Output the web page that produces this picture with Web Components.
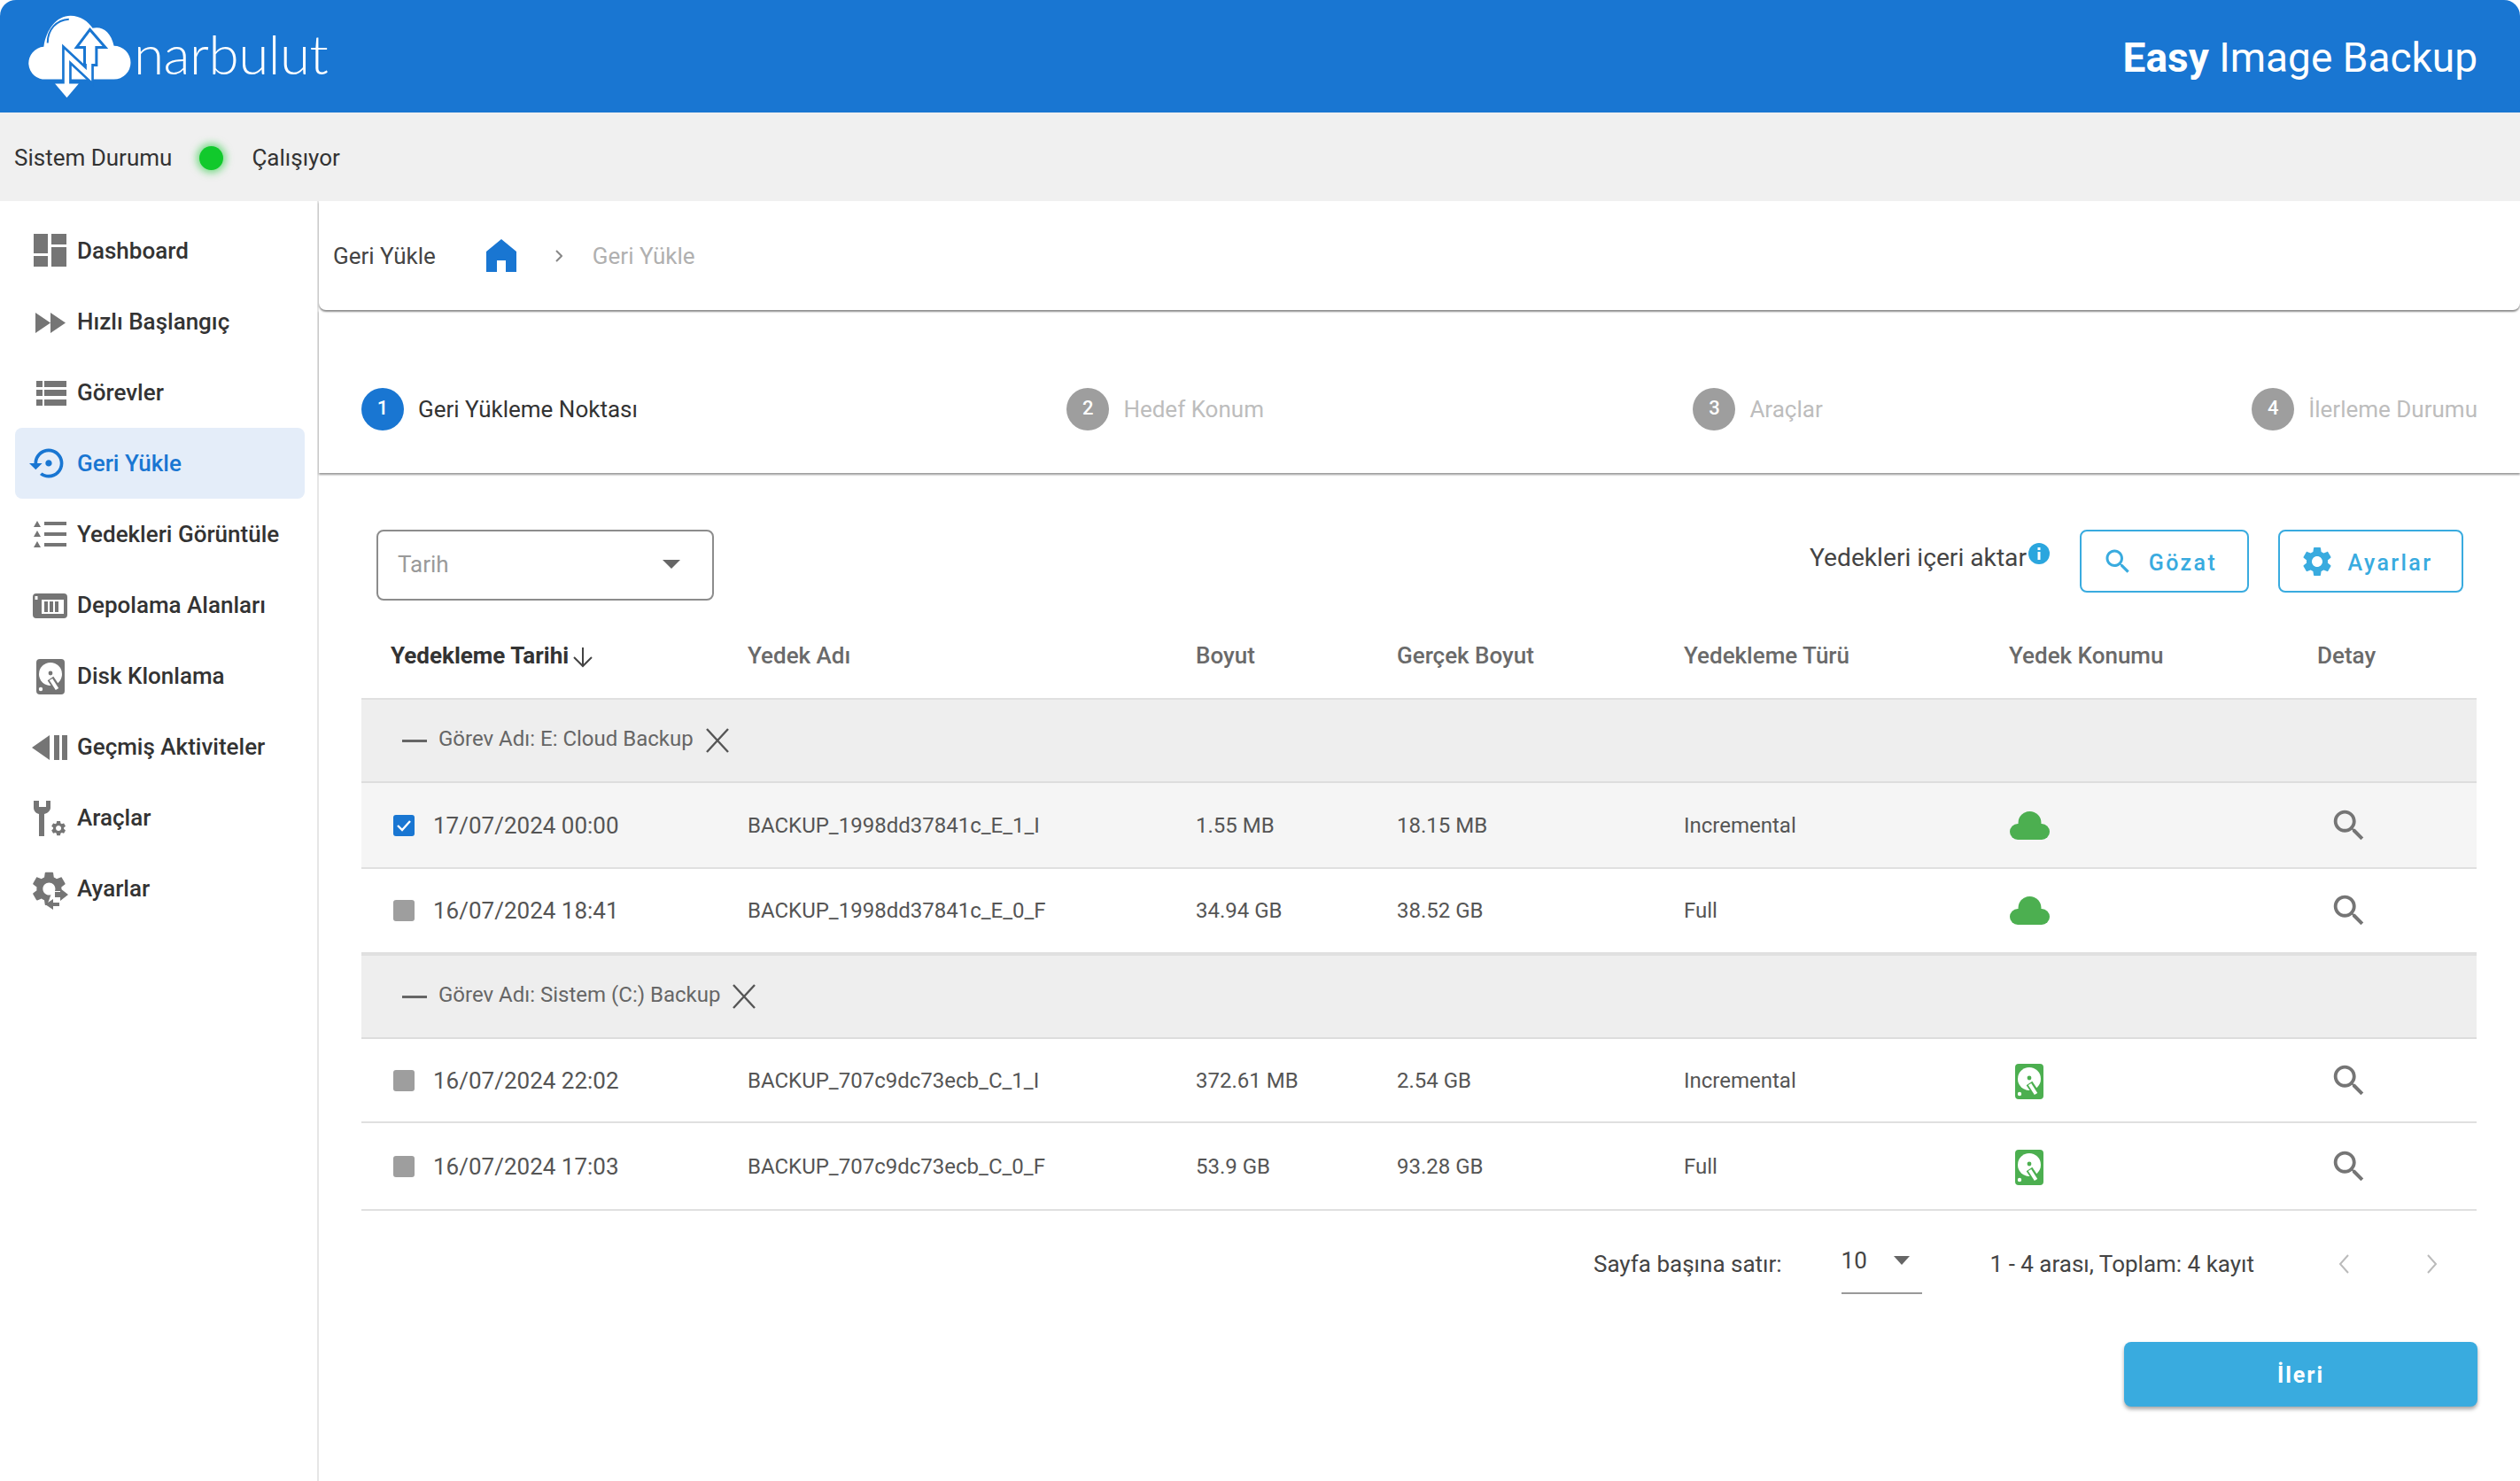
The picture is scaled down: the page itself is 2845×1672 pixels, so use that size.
<!DOCTYPE html>
<html lang="tr">
<head>
<meta charset="utf-8">
<title>Easy Image Backup</title>
<style>
    html, body { margin: 0; background: #fff; }
    body { font-family: Roboto, "Liberation Sans", sans-serif; color: #333; width: 2845px; height: 1672px; overflow: hidden; }
    .page { display: flex; height: 1445px; }
    .content { width: 2485px; display: flex; flex-direction: column; }
</style>
</head>
<body>
<app-header></app-header>
<status-bar state="Çalışıyor">Sistem Durumu</status-bar>
<div class="page">
    <side-nav>
        <nav-item icon="dashboard">Dashboard</nav-item>
        <nav-item icon="quick">Hızlı Başlangıç</nav-item>
        <nav-item icon="tasks">Görevler</nav-item>
        <nav-item icon="restore" active>Geri Yükle</nav-item>
        <nav-item icon="list">Yedekleri Görüntüle</nav-item>
        <nav-item icon="storage">Depolama Alanları</nav-item>
        <nav-item icon="disk">Disk Klonlama</nav-item>
        <nav-item icon="history">Geçmiş Aktiviteler</nav-item>
        <nav-item icon="tools">Araçlar</nav-item>
        <nav-item icon="settings">Ayarlar</nav-item>
    </side-nav>
    <div class="content">
        <bread-crumb title-text="Geri Yükle">Geri Yükle</bread-crumb>
        <step-bar>
            <step-item number="1" active>Geri Yükleme Noktası</step-item>
            <step-item number="2">Hedef Konum</step-item>
            <step-item number="3">Araçlar</step-item>
            <step-item number="4">İlerleme Durumu</step-item>
        </step-bar>
        <backup-toolbar>
            <span slot="select">Tarih</span>
            <span slot="label">Yedekleri içeri aktar</span>
            <outline-button icon="search">Gözat</outline-button>
            <outline-button icon="gear">Ayarlar</outline-button>
        </backup-toolbar>
        <backup-table>
            <table-head></table-head>
            <group-row height="96">Görev Adı: E: Cloud Backup</group-row>
            <backup-row height="97" loc="cloud" checked>
                <span slot="date">17/07/2024 00:00</span><span slot="name">BACKUP_1998dd37841c_E_1_I</span>
                <span slot="size">1.55 MB</span><span slot="real">18.15 MB</span><span slot="type">Incremental</span>
            </backup-row>
            <backup-row height="96" loc="cloud">
                <span slot="date">16/07/2024 18:41</span><span slot="name">BACKUP_1998dd37841c_E_0_F</span>
                <span slot="size">34.94 GB</span><span slot="real">38.52 GB</span><span slot="type">Full</span>
            </backup-row>
            <group-row height="96">Görev Adı: Sistem (C:) Backup</group-row>
            <backup-row height="95" loc="disk">
                <span slot="date">16/07/2024 22:02</span><span slot="name">BACKUP_707c9dc73ecb_C_1_I</span>
                <span slot="size">372.61 MB</span><span slot="real">2.54 GB</span><span slot="type">Incremental</span>
            </backup-row>
            <backup-row height="99" loc="disk">
                <span slot="date">16/07/2024 17:03</span><span slot="name">BACKUP_707c9dc73ecb_C_0_F</span>
                <span slot="size">53.9 GB</span><span slot="real">93.28 GB</span><span slot="type">Full</span>
            </backup-row>
        </backup-table>
        <table-pager></table-pager>
        <next-button>İleri</next-button>
    </div>
</div>

<script>
const GEAR = "M19.14 12.94c.04-.3.06-.61.06-.94 0-.32-.02-.64-.07-.94l2.03-1.58c.18-.14.23-.41.12-.61l-1.92-3.32c-.12-.22-.37-.29-.59-.22l-2.39.96c-.5-.38-1.03-.7-1.62-.94l-.36-2.54c-.04-.24-.24-.41-.48-.41h-3.84c-.24 0-.43.17-.47.41l-.36 2.54c-.59.24-1.13.57-1.62.94l-2.39-.96c-.22-.08-.47 0-.59.22L2.74 8.87c-.12.21-.08.47.12.61l2.03 1.58c-.05.3-.09.63-.09.94s.02.64.07.94l-2.03 1.58c-.18.14-.23.41-.12.61l1.92 3.32c.12.22.37.29.59.22l2.39-.96c.5.38 1.03.7 1.62.94l.36 2.54c.05.24.24.41.48.41h3.84c.24 0 .44-.17.47-.41l.36-2.54c.59-.24 1.13-.56 1.62-.94l2.39.96c.22.08.47 0 .59-.22l1.92-3.32c.12-.22.07-.47-.12-.61l-2.01-1.58zM12 15.6c-1.98 0-3.6-1.62-3.6-3.6s1.62-3.6 3.6-3.6 3.6 1.62 3.6 3.6-1.62 3.6-3.6 3.6z"
const SEARCH = "M15.5 14h-.79l-.28-.27C15.41 12.59 16 11.11 16 9.5 16 5.91 13.09 3 9.5 3S3 5.91 3 9.5 5.91 16 9.5 16c1.61 0 3.09-.59 4.23-1.57l.27.28v.79l5 4.99L20.49 19l-4.99-5zm-6 0C7.01 14 5 11.99 5 9.5S7.01 5 9.5 5 14 7.01 14 9.5 11.99 14 9.5 14z"
const RESTORE = "M14 12c0-1.1-.9-2-2-2s-2 .9-2 2 .9 2 2 2 2-.9 2-2zm-2-9c-4.97 0-9 4.03-9 9H0l4 4 4-4H5c0-3.87 3.13-7 7-7s7 3.13 7 7-3.13 7-7 7c-1.51 0-2.91-.49-4.06-1.3l-1.42 1.44C8.04 20.3 9.94 21 12 21c4.97 0 9-4.03 9-9s-4.03-9-9-9z"

// Disk drawing, used in the side menu (grey) and in the table (green)
const diskShape = color => `
    <rect x="8" y="3" width="32" height="40" rx="4" fill="${color}"/>
    <circle cx="24" cy="20" r="13" fill="#fff"/>
    <circle cx="24" cy="19" r="2.4" fill="${color}"/>
    <path d="M24 25l8 12" stroke="${color}" stroke-width="8" fill="none"/>
    <path d="M24.5 26l7 11" stroke="#fff" stroke-width="4" fill="none"/>
    <circle cx="13" cy="37" r="2.2" fill="#fff"/>`

// Menu icons live in a 44x44 box
const navIcons = {
    dashboard: `<path d="M5 3h16v22H5zM5 28h16v12H5zM25 3h17v12H25zM25 18h17v22H25z"/>`,
    quick: `<path d="M7 12l17 11.5L7 35zM24 12l17 11.5L24 35z"/>`,
    tasks: `<path d="M8 9h7v7H8zM17 9h25v7H17zM8 19h7v7H8zM17 19h25v7H17zM8 30h7v7H8zM17 30h25v7H17z"/>`,
    restore: `<path transform="scale(1.83)" d="${RESTORE}"/>`,
    list: `<path d="M9 7l4 7H5zM9 18l4 7H5zM9 30l4 7H5zM17 8h25v4H17zM17 20h25v4H17zM17 32h25v4H17z"/>`,
    storage: `<path fill-rule="evenodd" d="M8 9h31a4 4 0 0 1 4 4v20a4 4 0 0 1-4 4H8a4 4 0 0 1-4-4V13a4 4 0 0 1 4-4zM14 16v16h25V16zM6.500 12v4h3v-4z"/><path d="M17 18h4v12h-4zM23 18h4v12h-4zM29 18h4v12h-4z"/>`,
    disk: diskShape("#757575"),
    history: `<path d="M3 23L23 9v28zM28 9h6v28h-6zM37 9h6v28h-6z"/>`,
    tools: `<path d="M5 3v8c0 3 2 6 6 7v25h6V18c4-1 7-4 7-7V3l-5 0v7h-8V3z"/><path transform="translate(23 24) scale(.84)" d="${GEAR}"/>`,
    settings: `<path transform="translate(-1 -1) scale(1.95)" d="${GEAR}"/><path fill="#fff" d="M26 25h20v22H18z"/><path d="M29 26h6v-4l9 7-9 7v-4h-6zM27 34l-9 6 9 6v-4h7v-4h-7z"/>`
}

const bar = `:host { display: block; box-sizing: border-box; }`

class AppHeader extends HTMLElement {
    connectedCallback() {
        this.attachShadow({ mode: "open" }).innerHTML = `
            <style>
                ${bar}
                :host { height: 127px; background: #1976d2; border-radius: 18px 18px 0 0; color: #fff; }
                .in { height: 100%; display: flex; align-items: center; justify-content: space-between; padding: 0 48px 0 32px; }
                .logo { display: flex; align-items: flex-start; height: 127px; }
                svg { margin-top: 15px; display: block; }
                .word { font-family: Lato, sans-serif; font-weight: 300; font-size: 62px; line-height: 70px; margin: 25px 0 0 2px; letter-spacing: -.5px; }
                .title { font-size: 46px; padding-top: 3px; }
                b { font-weight: 700; }
            </style>
            <div class="in">
                <div class="logo">
                    <svg width="117" height="97" viewBox="35 45 350 290">
                        <path fill="#fff" d="M95 268a55 55 0 0 1-8-110c8-60 45-105 90-105 35 0 60 20 75 42 30-8 62 10 72 60a55 55 0 0 1 0 113z"/>
                        <path fill="none" stroke="#1976d2" stroke-width="6" d="M100 145c0-45 30-78 72-80"/>
                        <path fill="none" stroke="#1976d2" stroke-width="32" stroke-linejoin="miter" d="M165 290V185l75 70V140"/>
                        <path fill="#fff" stroke="#1976d2" stroke-width="9" d="M198 160l45-60 52 60h-30v60h-40v-60z"/>
                        <path fill="none" stroke="#fff" stroke-width="16" stroke-linejoin="miter" d="M165 290V185l75 70V140"/>
                        <path fill="#fff" d="M125 283h80l-40 47z"/>
                    </svg>
                    <span class="word">narbulut</span>
                </div>
                <div class="title"><b>Easy</b> Image Backup</div>
            </div>`
    }
}

class StatusBar extends HTMLElement {
    connectedCallback() {
        this.attachShadow({ mode: "open" }).innerHTML = `
            <style>
                ${bar}
                :host { height: 100px; background: #f0f0f0; font-size: 26px; color: #333; }
                .in { height: 100%; display: flex; align-items: center; padding: 2px 0 0 16px; box-sizing: border-box; }
                i { width: 27px; height: 27px; border-radius: 50%; background: #11c92c; box-shadow: 0 0 9px 3px rgba(17, 201, 44, .55); margin: 0 32px 0 31px; }
            </style>
            <div class="in"><slot></slot><i></i><span>${this.getAttribute("state")}</span></div>`
    }
}

class SideNav extends HTMLElement {
    connectedCallback() {
        this.attachShadow({ mode: "open" }).innerHTML = `
            <style>
                ${bar}
                :host { width: 360px; flex: none; border-right: 2px solid #e6e6e6; padding: 16px 14px 0 17px; }
            </style>
            <slot></slot>`
    }
}

class NavItem extends HTMLElement {
    connectedCallback() {
        const active = this.hasAttribute("active")
        this.attachShadow({ mode: "open" }).innerHTML = `
            <style>
                ${bar}
                :host { height: 80px; border-radius: 8px; background: ${active ? "#e4edf9" : "none"}; color: ${active ? "#1976d2" : "#333"}; font-size: 26px; font-weight: 500; }
                .in { height: 100%; display: flex; align-items: center; padding-left: 16px; }
                svg { margin-right: 10px; fill: ${active ? "#1976d2" : "#757575"}; flex: none; overflow: visible; }
            </style>
            <div class="in"><svg width="44" height="44" viewBox="0 0 44 44">${navIcons[this.getAttribute("icon")]}</svg><slot></slot></div>`
    }
}

class BreadCrumb extends HTMLElement {
    connectedCallback() {
        this.attachShadow({ mode: "open" }).innerHTML = `
            <style>
                ${bar}
                :host { height: 123px; flex: none; border-radius: 0 0 8px 8px; box-shadow: 0 2px 2px rgba(0, 0, 0, .45); font-size: 26px; color: #444; background: #fff; }
                .in { height: 100%; display: flex; align-items: center; padding: 0 0 0 16px; }
                svg.home { margin: 0 0 0 57px; }
                svg.next { margin: 0 34px 0 44px; }
                span { color: #b0b0b0; }
            </style>
            <div class="in">
                <slot></slot>
                <svg class="home" width="34" height="37" viewBox="0 0 34 37" fill="#1976d2"><path d="M17 0l17 14v23H22V24H12v13H0V14z"/></svg>
                <svg class="next" width="8" height="16" viewBox="0 0 8 16" fill="none" stroke="#888" stroke-width="2"><path d="M1 2l6 6-6 6"/></svg>
                <span>${this.getAttribute("title-text")}</span>
            </div>`
    }
}

class StepBar extends HTMLElement {
    connectedCallback() {
        this.attachShadow({ mode: "open" }).innerHTML = `
            <style>
                ${bar}
                :host { height: 184px; flex: none; box-shadow: 0 2px 2px rgba(0, 0, 0, .4); }
                .in { height: 100%; display: flex; align-items: center; justify-content: space-between; padding: 40px 48px 0 48px; box-sizing: border-box; }
            </style>
            <div class="in"><slot></slot></div>`
    }
}

class StepItem extends HTMLElement {
    connectedCallback() {
        const active = this.hasAttribute("active")
        this.attachShadow({ mode: "open" }).innerHTML = `
            <style>
                :host { display: flex; align-items: center; font-size: 26px; color: ${active ? "#333" : "#bdbdbd"}; }
                b { width: 48px; height: 48px; border-radius: 50%; background: ${active ? "#1976d2" : "#9e9e9e"}; color: #fff; font-size: 22px; font-weight: 500; display: flex; align-items: center; justify-content: center; margin-right: 16px; padding-bottom: 3px; box-sizing: border-box; }
            </style>
            <b>${this.getAttribute("number")}</b><slot></slot>`
    }
}

class BackupToolbar extends HTMLElement {
    connectedCallback() {
        this.attachShadow({ mode: "open" }).innerHTML = `
            <style>
                ${bar}
                :host { flex: none; margin: 64px 64px 0 65px; height: 94px; }
                .in { display: flex; justify-content: space-between; align-items: flex-start; }
                .select { width: 381px; height: 80px; box-sizing: border-box; border: 2px solid #8c8c8c; border-radius: 8px; display: flex; align-items: center; justify-content: space-between; padding: 0 36px 2px 22px; font-size: 26px; color: #9a9a9a; }
                .arrow { width: 0; height: 0; border: 10px solid transparent; border-top: 10px solid #666; border-bottom: 0; }
                .right { display: flex; align-items: flex-start; }
                .label { font-size: 28.2px; color: #444; line-height: 64px; }
                svg { margin: 15px 34px 0 2px; }
                ::slotted(outline-button) { margin-left: 33px; }
                ::slotted(outline-button:first-of-type) { margin-left: 0; }
            </style>
            <div class="in">
                <div class="select"><slot name="select"></slot><i class="arrow"></i></div>
                <div class="right">
                    <div class="label"><slot name="label"></slot></div>
                    <svg width="24" height="24" viewBox="0 0 24 24"><circle cx="12" cy="12" r="12" fill="#2ba6de"/><path fill="#fff" d="M10.500 10h3v9h-3zM10.500 5h3v3h-3z"/></svg>
                    <slot></slot>
                </div>
            </div>`
    }
}

class OutlineButton extends HTMLElement {
    connectedCallback() {
        const search = this.getAttribute("icon") === "search"
        this.attachShadow({ mode: "open" }).innerHTML = `
            <style>
                :host { display: inline-flex; align-items: center; justify-content: center; box-sizing: border-box; height: 71px; width: ${search ? 191 : 209}px; padding: 0 11px 0 0; border: 2px solid #39abdf; border-radius: 8px; color: #39abdf; font-size: 25px; font-weight: 500; letter-spacing: 2.4px; }
                svg { fill: #39abdf; margin-right: ${search ? 17 : 15}px; }
                span { padding-top: 3px; }
            </style>
            <svg width="${search ? 36 : 40}" height="${search ? 36 : 40}" viewBox="0 0 24 24"><path d="${search ? SEARCH : GEAR}"/></svg><span><slot></slot></span>`
    }
}

const tableColumns = "436px 506px 227px 324px 367px 348px 180px"

class BackupTable extends HTMLElement {
    connectedCallback() {
        this.attachShadow({ mode: "open" }).innerHTML = `
            <style>
                ${bar}
                :host { flex: none; margin: 0 49px 0 48px; --cols: ${tableColumns}; }
            </style>
            <slot></slot>`
    }
}

class TableHead extends HTMLElement {
    connectedCallback() {
        this.attachShadow({ mode: "open" }).innerHTML = `
            <style>
                ${bar}
                :host { display: grid; grid-template-columns: var(--cols); height: 96px; align-items: center; font-size: 26px; font-weight: 500; color: #6a6a6a; }
                .first { padding-left: 33px; color: #333; font-weight: 700; display: flex; align-items: center; }
                svg { margin: 4px 0 0 3px; }
            </style>
            <div class="first">Yedekleme Tarihi<svg width="26" height="24" viewBox="0 0 26 24" fill="none" stroke="#444" stroke-width="2"><path d="M13 1v21M3 12l10 10 10-10"/></svg></div>
            <div>Yedek Adı</div><div>Boyut</div><div>Gerçek Boyut</div><div>Yedekleme Türü</div><div>Yedek Konumu</div><div>Detay</div>`
    }
}

class GroupRow extends HTMLElement {
    connectedCallback() {
        this.attachShadow({ mode: "open" }).innerHTML = `
            <style>
                ${bar}
                :host { height: ${this.getAttribute("height")}px; background: #eeeeee; border-top: 2px solid #e0e0e0; border-bottom: 2px solid #dddddd; font-size: 24px; color: #666; }
                .in { height: 100%; display: flex; align-items: center; padding-left: 46px; padding-bottom: 4px; box-sizing: border-box; }
                i { width: 28px; height: 3px; background: #666; margin-right: 13px; margin-top: 4px; }
                svg { margin: 3px 0 0 13px; }
            </style>
            <div class="in"><i></i><slot></slot>
                <svg width="28" height="28" viewBox="0 0 28 28" fill="none" stroke="#555" stroke-width="2.400"><path d="M2 1l24 26M26 1L2 27"/></svg>
            </div>`
    }
}

class BackupRow extends HTMLElement {
    connectedCallback() {
        const checked = this.hasAttribute("checked")
        const loc = this.getAttribute("loc") === "cloud"
            ? `<svg width="45" height="32" viewBox="0 0 45 32" fill="#4caf50" style="margin-left:1px"><circle cx="22.500" cy="13" r="13"/><circle cx="9" cy="23" r="9"/><circle cx="36" cy="23" r="9"/><rect x="9" y="14" width="27" height="18"/></svg>`
            : `<svg width="44" height="44" viewBox="0 0 44 44" style="margin-left:-1px">${diskShape("#4caf50")}</svg>`
        this.attachShadow({ mode: "open" }).innerHTML = `
            <style>
                ${bar}
                :host { height: ${this.getAttribute("height")}px; display: grid; grid-template-columns: var(--cols); align-items: center; font-size: 24px; color: #555; background: ${checked ? "#f5f5f5" : "#fff"}; border-bottom: 2px solid #e0e0e0; }
                .date { display: flex; align-items: center; padding-left: 36px; font-size: 26px; }
                .box { width: 24px; height: 24px; border-radius: 3px; background: ${checked ? "#1976d2" : "#9e9e9e"}; margin-right: 21px; flex: none; display: block; }
                .loc svg { display: block; }
                .view { margin-left: 13px; }
                .view svg { display: block; }
            </style>
            <div class="date">
                <svg class="box" viewBox="0 0 24 24" fill="none" stroke="#fff" stroke-width="2.400">${checked ? `<path d="M5 12l5 5 9-10"/>` : ""}</svg>
                <slot name="date"></slot>
            </div>
            <div><slot name="name"></slot></div>
            <div><slot name="size"></slot></div>
            <div><slot name="real"></slot></div>
            <div><slot name="type"></slot></div>
            <div class="loc">${loc}</div>
            <div class="view"><svg width="46" height="46" viewBox="0 0 24 24" fill="#757575"><path d="${SEARCH}"/></svg></div>`
    }
}

class TablePager extends HTMLElement {
    connectedCallback() {
        this.attachShadow({ mode: "open" }).innerHTML = `
            <style>
                ${bar}
                :host { flex: none; height: 120px; margin-right: 49px; font-size: 26px; color: #444; }
                .in { height: 100%; display: flex; align-items: center; justify-content: flex-end; }
                .rows { width: 91px; height: 64px; margin: 4px 0 0 67px; box-sizing: border-box; border-bottom: 2px solid #999; display: flex; align-items: center; justify-content: space-between; padding: 0 14px 10px 0; }
                .arrow { width: 0; height: 0; border: 9px solid transparent; border-top: 10px solid #666; border-bottom: 0; }
                .range { margin-left: 77px; }
                svg { margin-left: 94px; }
                svg:last-child { margin: 0 43px 0 86px; }
            </style>
            <div class="in">
                <span>Sayfa başına satır:</span>
                <div class="rows"><span>10</span><i class="arrow"></i></div>
                <span class="range">1 - 4 arası, Toplam: 4 kayıt</span>
                <svg width="14" height="24" viewBox="0 0 14 24" fill="none" stroke="#bbb" stroke-width="2"><path d="M12 2L3 12l9 10"/></svg>
                <svg width="14" height="24" viewBox="0 0 14 24" fill="none" stroke="#bbb" stroke-width="2"><path d="M2 2l9 10-9 10"/></svg>
            </div>`
    }
}

class NextButton extends HTMLElement {
    connectedCallback() {
        this.attachShadow({ mode: "open" }).innerHTML = `
            <style>
                :host { display: flex; align-self: flex-end; flex: none; align-items: center; justify-content: center; width: 399px; height: 73px; margin: 28px 48px 0 0; padding-top: 2px; box-sizing: border-box; border-radius: 8px; background: #39abdf; color: #fff; font-size: 25px; font-weight: 700; letter-spacing: 2px; box-shadow: 0 3px 4px rgba(0, 0, 0, .35); }
            </style>
            <slot></slot>`
    }
}

customElements.define("app-header", AppHeader)
customElements.define("status-bar", StatusBar)
customElements.define("side-nav", SideNav)
customElements.define("nav-item", NavItem)
customElements.define("bread-crumb", BreadCrumb)
customElements.define("step-bar", StepBar)
customElements.define("step-item", StepItem)
customElements.define("backup-toolbar", BackupToolbar)
customElements.define("outline-button", OutlineButton)
customElements.define("backup-table", BackupTable)
customElements.define("table-head", TableHead)
customElements.define("group-row", GroupRow)
customElements.define("backup-row", BackupRow)
customElements.define("table-pager", TablePager)
customElements.define("next-button", NextButton)
</script>
</body>
</html>
